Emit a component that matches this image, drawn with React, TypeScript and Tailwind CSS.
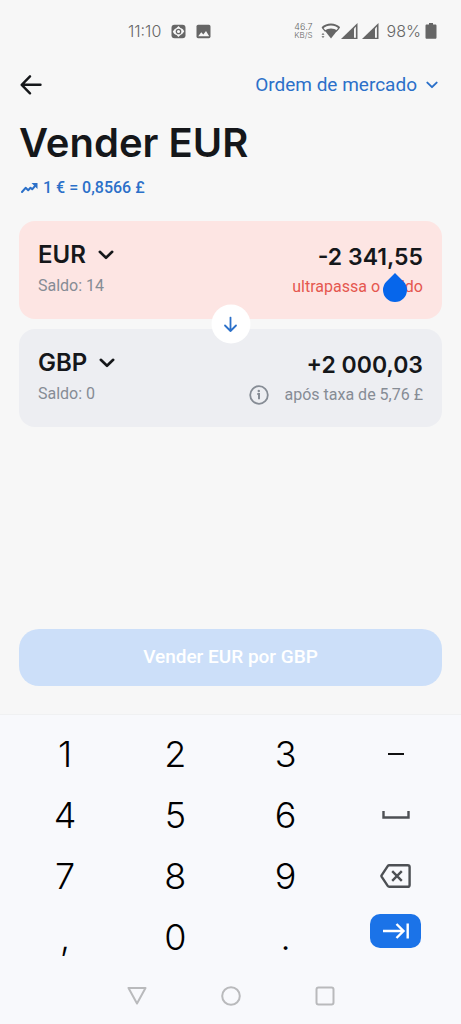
import { useState } from "react";
import type { ReactNode } from "react";

type Tone = "error" | "neutral";

interface CurrencyCardProps {
  currency: string;
  balance: string;
  amount: string;
  onAmountChange: (v: string) => void;
  tone: Tone;
  note: ReactNode;
}

const DIGIT_ROWS = [
  ["1", "2", "3"],
  ["4", "5", "6"],
  ["7", "8", "9"],
  [",", "0", "."],
];

const Chevron = ({ className }: { className: string }) => (
  <svg viewBox="0 0 16 10" fill="none" className={className} aria-hidden="true">
    <path
      d="M1.8 1.8 8 7.8l6.2-6"
      stroke="currentColor"
      strokeWidth="2.6"
      strokeLinecap="round"
      strokeLinejoin="round"
    />
  </svg>
);

const Signal = () => (
  <svg viewBox="0 0 17 17" className="h-[17px] w-[17px]" aria-hidden="true">
    <path d="M0 16 16.500 0v16z" fill="#666" />
    <path d="M13 5.500v9.300h1.900V3.600z" fill="#f7f7f7" />
  </svg>
);

const StatusBar = () => (
  <div className="flex h-[62px] items-center justify-between pr-6 pl-32 font-['Inter',sans-serif] text-[#666]">
    <div className="flex items-center gap-[10px]">
      <span className="text-base font-light">11:10</span>
      <svg viewBox="0 0 15 15" className="h-[15px] w-[15px]" aria-hidden="true">
        <rect x=".5" y=".8" width="14" height="13.4" rx="3" fill="#666" />
        <path
          d="M1.800 7.500 4 4.800l1-.2L7.600 2l1.800 2.100c2.200.5 3 1.600 3.800 3.400L11 10.200l-1 .2L7.400 13l-1.800-2.100C3.400 10.400 2.600 9.300 1.800 7.500z"
          fill="#f7f7f7"
        />
        <circle cx="7.500" cy="7.500" r="2.200" fill="none" stroke="#666" strokeWidth="1.300" />
      </svg>
      <svg viewBox="0 0 15 15" className="h-[15px] w-[15px]" aria-hidden="true">
        <rect x=".5" y=".8" width="14" height="13.400" rx="1.600" fill="#666" />
        <path d="M2.200 12.200 5.300 8.300l2 2.300 2.700-3.600 3.200 5.200z" fill="#f7f7f7" />
      </svg>
    </div>
    <div className="flex items-center">
      <div className="mr-2 text-center text-[9px] leading-[8px] font-light">
        <div>46.7</div>
        <div className="text-[8px]">KB/S</div>
      </div>
      <svg viewBox="0 0 19 16" className="h-4 w-[19px]" aria-hidden="true">
        <path d="M10 15.500 3.700 7.600c3.600-2.800 9-2.800 12.600 0z" fill="#666" />
        <path d="M1.200 5c5-4.600 12.600-4.600 17.300 0" fill="none" stroke="#666" strokeWidth="2" />
        <path d="m1.600 5 2.800 3.300M18 5l-2.800 3.300" stroke="#666" strokeWidth="1.200" />
        <path d="m.5 11.800 1.500-1.800 1.500 1.800zM.5 13.200h3L2 15z" fill="#666" />
      </svg>
      <div className="ml-px flex gap-1">
        <Signal />
        <Signal />
      </div>
      <span className="ml-2 text-base font-light">98%</span>
      <svg viewBox="0 0 12 16" className="ml-1 h-4 w-3" aria-hidden="true">
        <path
          d="M4 0h4v1.500h2.200c.8 0 1.300.5 1.300 1.300v11.700c0 .8-.5 1.300-1.300 1.300H1.800c-.8 0-1.300-.5-1.300-1.300V2.800c0-.8.5-1.300 1.300-1.300H4z"
          fill="#666"
        />
      </svg>
    </div>
  </div>
);

const CurrencyCard = ({
  currency,
  balance,
  amount,
  onAmountChange,
  tone,
  note,
}: CurrencyCardProps) => (
  <div
    className={`flex h-[98px] justify-between rounded-2xl px-[19px] pt-[18px] ${
      tone === "error" ? "bg-[#fde5e3]" : "bg-[#edeef2]"
    }`}
  >
    <div>
      <button className="flex h-8 items-center gap-3 font-['Inter',sans-serif] text-2xl font-semibold text-[#15171a]">
        {currency}
        <Chevron className="h-[10px] w-4" />
      </button>
      <div className="h-[30px] text-base leading-[30px] text-[#868c95]">
        Saldo: {balance}
      </div>
    </div>
    <div className="flex flex-col items-end">
      <input
        aria-label={`Valor em ${currency}`}
        inputMode="decimal"
        value={amount}
        onChange={(e) => onAmountChange(e.target.value)}
        className="h-9 w-44 bg-transparent text-right font-['Inter',sans-serif] text-[23px] font-semibold text-[#15171a] outline-none"
      />
      <div className="flex h-6 items-center text-base">{note}</div>
    </div>
  </div>
);

const Key = ({
  label,
  onPress,
  children,
}: {
  label: string;
  onPress?: () => void;
  children: ReactNode;
}) => (
  <button
    aria-label={label}
    onClick={onPress}
    className="flex h-[61px] items-center justify-center text-4xl font-light text-black"
  >
    {children}
  </button>
);

const App = () => {
  const [sell, setSell] = useState("-2 341,55");
  const [buy, setBuy] = useState("+2 000,03");

  const press = (key: string) => setSell((v) => v + key);

  const sideKeys = [
    <Key key="minus" label="Menos" onPress={() => press("-")}>
      <svg viewBox="0 0 16 2" className="h-[2px] w-4">
        <path d="M0 1h16" stroke="#111" strokeWidth="2" />
      </svg>
    </Key>,
    <Key key="space" label="Espaço" onPress={() => press(" ")}>
      <svg viewBox="0 0 28 8" className="h-2 w-7" fill="none">
        <path d="M1.500 0v6.500h25V0" stroke="#4d5054" strokeWidth="2.400" />
      </svg>
    </Key>,
    <Key key="del" label="Apagar" onPress={() => setSell((v) => v.slice(0, -1))}>
      <svg viewBox="0 0 31 24" className="h-6 w-[31px]" fill="none" stroke="#4d5054" strokeWidth="2.400">
        <path d="M9.300 1.200h18.400c1.100 0 1.900.8 1.900 1.900v17.800c0 1.100-.8 1.900-1.900 1.900H9.300c-.7 0-1.200-.3-1.600-.9L1.600 12.600a1.200 1.200 0 0 1 0-1.200L7.700 2.100c.4-.6.9-.9 1.600-.9z" />
        <path d="m12.200 7.200 9.600 9.600m0-9.600-9.600 9.600" />
      </svg>
    </Key>,
    <button
      key="next"
      aria-label="Seguinte"
      className="mt-2 flex h-[34px] w-[51px] items-center justify-center justify-self-center rounded-[10px] bg-[#1b73e8]"
    >
      <svg viewBox="0 0 26 16" className="h-4 w-[26px]" fill="none" stroke="#fff" strokeWidth="2.400">
        <path d="M0 8h20.500M13.500 1l7 7-7 7M24.700.5v15" />
      </svg>
    </button>,
  ];

  return (
    <div className="flex min-h-screen flex-col bg-[#f7f7f7] font-['Roboto',sans-serif]">
      <StatusBar />

      <main className="flex flex-1 flex-col px-[19px] pb-7">
        <div className="flex h-[46px] items-center justify-between">
          <button aria-label="Voltar">
            <svg viewBox="0 0 24 20" className="h-5 w-6" fill="none">
              <path
                d="M21.500 9.800H3M11 1.300 2.700 9.800l8.300 8.500"
                stroke="#15171a"
                strokeWidth="2.400"
                strokeLinecap="round"
                strokeLinejoin="round"
              />
            </svg>
          </button>
          <button className="flex items-center gap-[9px] pr-1 text-[19px] text-[#2b70c9]">
            Ordem de mercado
            <Chevron className="h-2 w-3" />
          </button>
        </div>

        <h1 className="mt-3 font-['Inter',sans-serif] text-[40px] leading-[46px] font-semibold text-[#15171a]">
          Vender EUR
        </h1>

        <div className="mt-[10px] flex h-6 items-center gap-[5px] pl-[2px] text-base font-medium text-[#2b70c9]">
          <svg viewBox="0 0 17 12" className="h-3 w-[17px]" fill="none" aria-hidden="true">
            <path
              d="m1 10 3.600-4.200 2.600 2.400 2.300-2.400 1.700 1.500 3.600-4.300"
              stroke="currentColor"
              strokeWidth="2"
              strokeLinecap="round"
              strokeLinejoin="round"
            />
            <path d="M10.500 1h6v6z" fill="currentColor" />
          </svg>
          1 € = 0,8566 £
        </div>

        <div className="relative mt-[21px] flex flex-col gap-[10px]">
          <CurrencyCard
            currency="EUR"
            balance="14"
            amount={sell}
            onAmountChange={setSell}
            tone="error"
            note={
              <span className="relative text-[#e5574f]">
                ultrapassa o saldo
                {/* text cursor handle */}
                <svg
                  viewBox="0 0 24 29"
                  className="absolute right-4 bottom-[-3px] h-[29px] w-6"
                  aria-hidden="true"
                >
                  <path d="M12 0 20.500 8.500a12 12 0 1 1-17 0z" fill="#0666eb" />
                </svg>
              </span>
            }
          />
          <CurrencyCard
            currency="GBP"
            balance="0"
            amount={buy}
            onAmountChange={setBuy}
            tone="neutral"
            note={
              <span className="flex items-center gap-4 text-[#868c95]">
                <svg viewBox="0 0 20 20" className="h-5 w-5" fill="none" aria-hidden="true">
                  <circle cx="10" cy="10" r="8.800" stroke="currentColor" strokeWidth="1.800" />
                  <path d="M8.300 9H10v5.300" stroke="currentColor" strokeWidth="2" />
                  <circle cx="9.800" cy="6" r="1.200" fill="currentColor" />
                </svg>
                após taxa de 5,76 £
              </span>
            }
          />
          <button
            aria-label="Inverter moedas"
            className="absolute top-1/2 left-1/2 flex h-[39px] w-[39px] -translate-x-1/2 -translate-y-1/2 items-center justify-center rounded-full bg-white"
          >
            <svg viewBox="0 0 14 16" className="h-4 w-[14px]" fill="none">
              <path
                d="M7 1v13.500M1.500 9 7 14.500 12.500 9"
                stroke="#2b70c9"
                strokeWidth="1.800"
                strokeLinecap="round"
                strokeLinejoin="round"
              />
            </svg>
          </button>
        </div>

        <button className="mt-auto h-[57px] rounded-[20px] bg-[#ccdff9] text-[19px] font-medium text-white">
          Vender EUR por GBP
        </button>
      </main>

      <footer className="border-t border-[#f0f1f2] bg-[#f8f9fc]">
        <div className="grid grid-cols-4 items-start px-[10px] pt-2 font-['Inter',sans-serif]">
          {DIGIT_ROWS.map((row, i) => [
            ...row.map((k) => (
              <Key key={k} label={k} onPress={() => press(k)}>
                {k}
              </Key>
            )),
            sideKeys[i],
          ])}
        </div>
        <nav className="flex h-[57px] items-center justify-center gap-[74px]">
          <button aria-label="Anterior">
            <svg viewBox="0 0 20 20" className="h-5 w-5" fill="none">
              <path d="M1.500 2h17L10 17.500z" stroke="#b9babc" strokeWidth="2" strokeLinejoin="round" />
            </svg>
          </button>
          <button aria-label="Início">
            <svg viewBox="0 0 20 20" className="h-5 w-5" fill="none">
              <circle cx="10" cy="10" r="8.800" stroke="#b9babc" strokeWidth="2" />
            </svg>
          </button>
          <button aria-label="Recentes">
            <svg viewBox="0 0 20 20" className="h-5 w-5" fill="none">
              <rect x="1.500" y="1.500" width="17" height="17" rx="2" stroke="#b9babc" strokeWidth="2" />
            </svg>
          </button>
        </nav>
      </footer>
    </div>
  );
};

export default App;
